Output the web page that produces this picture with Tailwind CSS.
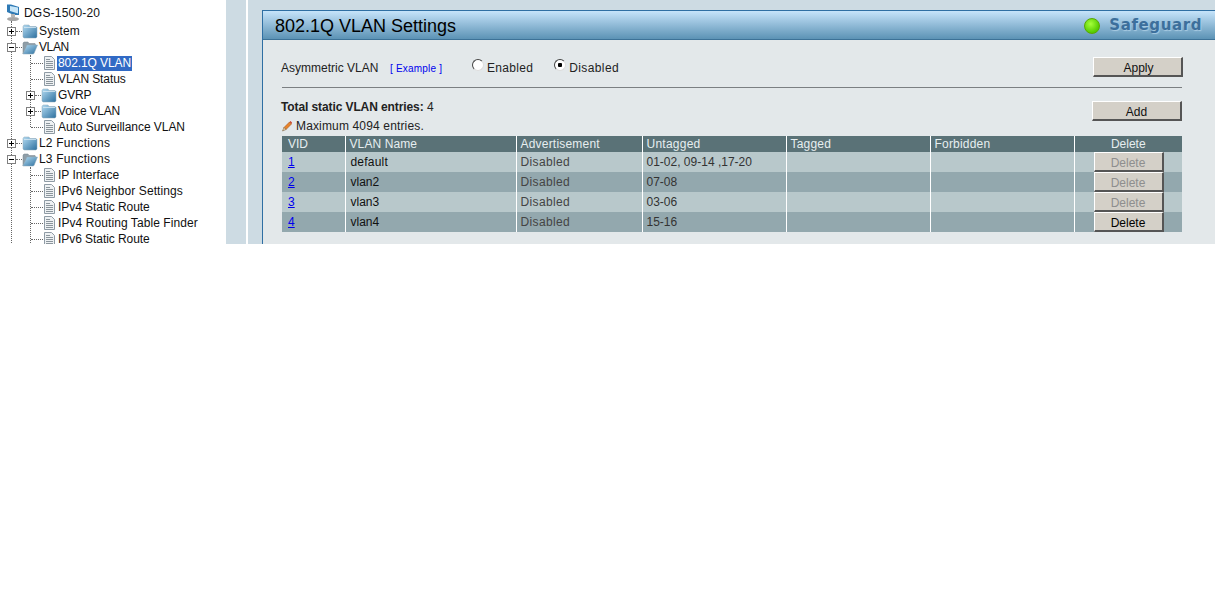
<!DOCTYPE html>
<html lang="en">
  <head>
    <meta charset="UTF-8" />
    <title>802.1Q VLAN Settings</title>
    <script src="https://cdn.jsdelivr.net/npm/@tailwindcss/browser@4"></script>
  </head>
  <body class="bg-white font-['Liberation_Sans',Arial,sans-serif] text-[12px] text-[#111]">
    <!-- icon sprites -->
    <svg class="absolute h-0 w-0" width="0" height="0">
      <defs>
        <linearGradient id="fold" x1="0" y1="0" x2="1" y2="1">
          <stop offset="0" stop-color="#b4dcf3" />
          <stop offset="1" stop-color="#2c6f9e" />
        </linearGradient>
        <symbol id="folder" viewBox="0 0 16 16">
          <path d="M1 3.500 2 2h5l1 1.500h6l1 1V14l-1 1H2l-1-1z" fill="url(#fold)" stroke="#8fa8b9" stroke-width=".5" />
          <path d="M2 4.500h12" stroke="#d5e8f4" stroke-width=".8" />
        </symbol>
        <symbol id="folder-open" viewBox="0 0 16 16">
          <path d="M1 15V4l1-1h4l1 1.500h6l.5 1V7H5z" fill="#8f9ea8" stroke="#77858e" stroke-width=".5" />
          <path d="M1 15 5 6h10.500L12 14.500l-1 .5z" fill="url(#fold)" stroke="#8fa8b9" stroke-width=".5" />
        </symbol>
        <symbol id="doc" viewBox="0 0 13 14">
          <path d="M1.500.5h7l3 3v10h-10z" fill="#eef1f3" stroke="#8f9ba5" />
          <path d="M3 3.500h4M3 5.500h7M3 7.500h7M3 9.500h7M3 11.500h7" stroke="#8b959c" />
        </symbol>
      </defs>
    </svg>

    <div class="flex h-[244px] overflow-hidden">
      <!-- Tree -->
      <div class="w-[226px] shrink-0 pt-[5px] pl-[5px]">
        <div class="flex h-4 items-center">
          <svg class="h-[18px] w-[16px] shrink-0" viewBox="0 0 16 18">
            <path d="M2 .5h4L14 3v8H9L2 8z" fill="#2f7ab5" />
            <path d="M5 2l8 1.500v6L5 7z" fill="#c8e6f8" />
            <path d="M6 10h4v3H6z" fill="#b5b5b5" />
            <ellipse cx="8" cy="15" rx="6" ry="2" fill="#a6a6a6" />
          </svg>
          <span class="ml-[3px] tracking-[0.2px]">DGS-1500-20</span>
        </div>

        <div class="ml-[6px] border-l border-dotted border-[#666] pt-[2px]">
          <div class="flex h-4 items-center">
            <span class="-ml-[5px] flex h-[9px] w-[9px] shrink-0 items-center justify-center border border-[#808080] bg-white"><span class="relative block h-px w-[5px] bg-black"><span class="absolute -top-[2px] left-[2px] block h-[5px] w-px bg-black"></span></span></span>
            <span class="w-[6px] border-t border-dotted border-[#666]"></span>
            <svg class="h-4 w-4 shrink-0"><use href="#folder" /></svg>
            <span class="ml-[1px] tracking-[0.15px]">System</span>
          </div>
          <div class="flex h-4 items-center">
            <span class="-ml-[5px] flex h-[9px] w-[9px] shrink-0 items-center justify-center border border-[#808080] bg-white"><span class="block h-px w-[5px] bg-black"></span></span>
            <span class="w-[6px] border-t border-dotted border-[#666]"></span>
            <svg class="h-4 w-4 shrink-0"><use href="#folder-open" /></svg>
            <span class="ml-[1px] tracking-[-0.4px]">VLAN</span>
          </div>

          <div class="ml-[18px] mb-[8px] h-[72px] border-l border-dotted border-[#666]">
            <div class="flex h-4 items-center">
              <span class="w-[12px] border-t border-dotted border-[#666]"></span>
              <svg class="h-[14px] w-[13px] shrink-0"><use href="#doc" /></svg>
              <span class="ml-[1px] bg-[#316ac5] px-[1px] leading-[15px] tracking-[-0.1px] text-white">802.1Q VLAN</span>
            </div>
            <div class="flex h-4 items-center">
              <span class="w-[12px] border-t border-dotted border-[#666]"></span>
              <svg class="h-[14px] w-[13px] shrink-0"><use href="#doc" /></svg>
              <span class="ml-[2px] tracking-[-0.1px]">VLAN Status</span>
            </div>
            <div class="flex h-4 items-center">
              <span class="-ml-[5px] flex h-[9px] w-[9px] shrink-0 items-center justify-center border border-[#808080] bg-white"><span class="relative block h-px w-[5px] bg-black"><span class="absolute -top-[2px] left-[2px] block h-[5px] w-px bg-black"></span></span></span>
              <span class="w-[6px] border-t border-dotted border-[#666]"></span>
              <svg class="h-4 w-4 shrink-0"><use href="#folder" /></svg>
              <span class="ml-[1px] tracking-[-0.2px]">GVRP</span>
            </div>
            <div class="flex h-4 items-center">
              <span class="-ml-[5px] flex h-[9px] w-[9px] shrink-0 items-center justify-center border border-[#808080] bg-white"><span class="relative block h-px w-[5px] bg-black"><span class="absolute -top-[2px] left-[2px] block h-[5px] w-px bg-black"></span></span></span>
              <span class="w-[6px] border-t border-dotted border-[#666]"></span>
              <svg class="h-4 w-4 shrink-0"><use href="#folder" /></svg>
              <span class="ml-[1px] tracking-[-0.2px]">Voice VLAN</span>
            </div>
            <div class="flex h-4 items-center">
              <span class="w-[12px] border-t border-dotted border-[#666]"></span>
              <svg class="h-[14px] w-[13px] shrink-0"><use href="#doc" /></svg>
              <span class="ml-[2px] whitespace-nowrap tracking-[-0.05px]">Auto Surveillance VLAN</span>
            </div>
          </div>

          <div class="flex h-4 items-center">
            <span class="-ml-[5px] flex h-[9px] w-[9px] shrink-0 items-center justify-center border border-[#808080] bg-white"><span class="relative block h-px w-[5px] bg-black"><span class="absolute -top-[2px] left-[2px] block h-[5px] w-px bg-black"></span></span></span>
            <span class="w-[6px] border-t border-dotted border-[#666]"></span>
            <svg class="h-4 w-4 shrink-0"><use href="#folder" /></svg>
            <span class="ml-[1px] tracking-[0.2px]">L2 Functions</span>
          </div>
          <div class="flex h-4 items-center">
            <span class="-ml-[5px] flex h-[9px] w-[9px] shrink-0 items-center justify-center border border-[#808080] bg-white"><span class="block h-px w-[5px] bg-black"></span></span>
            <span class="w-[6px] border-t border-dotted border-[#666]"></span>
            <svg class="h-4 w-4 shrink-0"><use href="#folder-open" /></svg>
            <span class="ml-[1px] tracking-[0.2px]">L3 Functions</span>
          </div>

          <div class="ml-[18px] border-l border-dotted border-[#666]">
            <div class="flex h-4 items-center">
              <span class="w-[12px] border-t border-dotted border-[#666]"></span>
              <svg class="h-[14px] w-[13px] shrink-0"><use href="#doc" /></svg>
              <span class="ml-[2px]">IP Interface</span>
            </div>
            <div class="flex h-4 items-center">
              <span class="w-[12px] border-t border-dotted border-[#666]"></span>
              <svg class="h-[14px] w-[13px] shrink-0"><use href="#doc" /></svg>
              <span class="ml-[2px] tracking-[0.1px]">IPv6 Neighbor Settings</span>
            </div>
            <div class="flex h-4 items-center">
              <span class="w-[12px] border-t border-dotted border-[#666]"></span>
              <svg class="h-[14px] w-[13px] shrink-0"><use href="#doc" /></svg>
              <span class="ml-[2px] tracking-[-0.06px]">IPv4 Static Route</span>
            </div>
            <div class="flex h-4 items-center">
              <span class="w-[12px] border-t border-dotted border-[#666]"></span>
              <svg class="h-[14px] w-[13px] shrink-0"><use href="#doc" /></svg>
              <span class="ml-[2px] tracking-[0.08px]">IPv4 Routing Table Finder</span>
            </div>
            <div class="flex h-4 items-center">
              <span class="w-[12px] border-t border-dotted border-[#666]"></span>
              <svg class="h-[14px] w-[13px] shrink-0"><use href="#doc" /></svg>
              <span class="ml-[2px] tracking-[-0.06px]">IPv6 Static Route</span>
            </div>
          </div>
        </div>
      </div>

      <div class="w-[20px] shrink-0 bg-[#cddbe3]"></div>
      <div class="w-[2px] shrink-0 bg-white"></div>

      <!-- Main -->
      <div class="flex-1 bg-[#cddbe3] pl-[14px] pt-[10px]">
        <div class="h-full border-l border-t border-[#2f6fa3] bg-[#e3e8ea]">
          <div class="flex h-[29px] items-center justify-between border-b border-[#3d7297] bg-gradient-to-b from-[#c6e4fa] to-[#5c93b5] pl-[12px] pr-[13px]">
            <h1 class="mt-[2px] text-[18px] leading-none text-black">802.1Q VLAN Settings</h1>
            <div class="mt-[1px] flex items-center">
              <span class="h-[16px] w-[16px] rounded-full border border-[#5aa800] bg-[radial-gradient(circle_at_40%_35%,#a6ff3a,#55cc00_70%)]"></span>
              <span class="ml-[9px] font-['DejaVu_Sans',sans-serif] text-[15px] leading-none font-bold tracking-[0.6px] text-[#3c6f9c] [text-shadow:1px_1px_1px_#a9cbe2]">Safeguard</span>
            </div>
          </div>

          <div class="w-[919px] pl-[19px]">
            <div class="flex h-[48px] items-center border-b border-[#7b7f82] pt-[8px]">
              <span class="-ml-[1px] mt-[1px] w-[109px] text-[#222]">Asymmetric VLAN</span>
              <a class="mt-[2px] w-[82px] text-[10px] tracking-[0.2px] text-[#0000ee]" href="#">[ Example ]</a>
              <label class="mt-[1px] flex items-center tracking-[0.3px] text-[#222]">
                <input type="radio" name="asym" class="-mt-[7px] h-3 w-3 appearance-none rounded-full border border-t-[#444] border-l-[#444] border-r-[#ddd] border-b-[#ddd] bg-white" />
                <span class="ml-[3px]">Enabled</span>
              </label>
              <label class="mt-[1px] ml-[21px] flex items-center tracking-[0.4px] text-[#222]">
                <input type="radio" name="asym" checked class="-mt-[7px] h-3 w-3 appearance-none rounded-full border border-t-[#444] border-l-[#444] border-r-[#ddd] border-b-[#ddd] bg-[radial-gradient(circle,#000_2px,#fff_2.5px)]" />
                <span class="ml-[3px]">Disabled</span>
              </label>
              <button class="ml-auto -mr-[1px] -mt-[1px] h-[20px] w-[90px] border-t border-l border-white border-r-2 border-b-2 border-r-[#555] border-b-[#555] bg-[#d4d0c8] pt-[1px] pl-[2px] text-[12px] text-[#111]">Apply</button>
            </div>

            <div class="relative -ml-[1px] h-[48px] pt-[12px]">
              <p class="leading-[14px] text-[#222]"><b class="tracking-[-0.1px]">Total static VLAN entries:</b> 4</p>
              <p class="mt-[5px] flex items-center leading-[14px] tracking-[0.15px] text-[#222]">
                <svg class="mr-[3px] h-[12px] w-[12px]" viewBox="0 0 12 12">
                  <path d="M3 7.500 8.500 2l2 2L5 9.500z" fill="#e8842a" stroke="#a5531a" stroke-width=".6" />
                  <path d="M8.500 2 9.500 1l1.500 1.500-.5 1.500z" fill="#c8402c" />
                  <path d="M3 7.500 5 9.500 1.500 11z" fill="#f1d9a8" stroke="#6b4a2a" stroke-width=".5" />
                </svg>
                Maximum 4094 entries.
              </p>
              <button class="absolute right-0 top-[13px] h-[20px] w-[90px] border-t border-l border-white border-r-2 border-b-2 border-r-[#555] border-b-[#555] bg-[#d4d0c8] pt-[1px] text-[12px] text-[#111]">Add</button>
            </div>

            <table class="w-[900px] table-fixed border-collapse text-left text-[#222]">
              <colgroup>
                <col class="w-[63px]" /><col class="w-[171px]" /><col class="w-[126px]" /><col class="w-[144px]" /><col class="w-[144px]" /><col class="w-[144px]" /><col class="w-[108px]" />
              </colgroup>
              <thead class="bg-[#5a7277] text-[#e6eef0]">
                <tr class="h-4 leading-4">
                  <th class="border-r border-white pl-[6px] font-normal">VID</th>
                  <th class="border-r border-white pl-[4px] font-normal tracking-[0.1px]">VLAN Name</th>
                  <th class="border-r border-white pl-[4px] font-normal tracking-[0.2px]">Advertisement</th>
                  <th class="border-r border-white pl-[4px] font-normal tracking-[0.25px]">Untagged</th>
                  <th class="border-r border-white pl-[4px] font-normal tracking-[0.2px]">Tagged</th>
                  <th class="border-r border-white pl-[4px] font-normal tracking-[0.2px]">Forbidden</th>
                  <th class="text-center font-normal">Delete</th>
                </tr>
              </thead>
              <tbody>
                <tr class="h-5 bg-[#b8c8cb]">
                  <td class="border-r border-white pl-[6px]"><a class="text-[#0000ee] underline" href="#">1</a></td>
                  <td class="border-r border-white pl-[5px] tracking-[0.2px] text-[#111]">default</td>
                  <td class="border-r border-white pl-[4px] tracking-[0.35px] text-[#444]">Disabled</td>
                  <td class="border-r border-white pl-[4px] text-[#333]">01-02, 09-14 ,17-20</td>
                  <td class="border-r border-white"></td>
                  <td class="border-r border-white"></td>
                  <td class="p-0 pl-[19px]"><button disabled class="block h-5 w-[70px] border-t border-l border-white border-r-2 border-b-2 border-r-[#555] border-b-[#555] bg-[#d4d0c8] pt-[1px] text-[12px] text-[#8e8e8e]">Delete</button></td>
                </tr>
                <tr class="h-5 bg-[#93a8ae]">
                  <td class="border-r border-white pl-[6px]"><a class="text-[#0000ee] underline" href="#">2</a></td>
                  <td class="border-r border-white pl-[5px] text-[#111]">vlan2</td>
                  <td class="border-r border-white pl-[4px] tracking-[0.35px] text-[#444]">Disabled</td>
                  <td class="border-r border-white pl-[4px] text-[#333]">07-08</td>
                  <td class="border-r border-white"></td>
                  <td class="border-r border-white"></td>
                  <td class="p-0 pl-[19px]"><button disabled class="block h-5 w-[70px] border-t border-l border-white border-r-2 border-b-2 border-r-[#555] border-b-[#555] bg-[#d4d0c8] pt-[1px] text-[12px] text-[#8e8e8e]">Delete</button></td>
                </tr>
                <tr class="h-5 bg-[#b8c8cb]">
                  <td class="border-r border-white pl-[6px]"><a class="text-[#0000ee] underline" href="#">3</a></td>
                  <td class="border-r border-white pl-[5px] text-[#111]">vlan3</td>
                  <td class="border-r border-white pl-[4px] tracking-[0.35px] text-[#444]">Disabled</td>
                  <td class="border-r border-white pl-[4px] text-[#333]">03-06</td>
                  <td class="border-r border-white"></td>
                  <td class="border-r border-white"></td>
                  <td class="p-0 pl-[19px]"><button disabled class="block h-5 w-[70px] border-t border-l border-white border-r-2 border-b-2 border-r-[#555] border-b-[#555] bg-[#d4d0c8] pt-[1px] text-[12px] text-[#8e8e8e]">Delete</button></td>
                </tr>
                <tr class="h-5 bg-[#93a8ae]">
                  <td class="border-r border-white pl-[6px]"><a class="text-[#0000ee] underline" href="#">4</a></td>
                  <td class="border-r border-white pl-[5px] text-[#111]">vlan4</td>
                  <td class="border-r border-white pl-[4px] tracking-[0.35px] text-[#444]">Disabled</td>
                  <td class="border-r border-white pl-[4px] text-[#333]">15-16</td>
                  <td class="border-r border-white"></td>
                  <td class="border-r border-white"></td>
                  <td class="p-0 pl-[19px]"><button class="block h-5 w-[70px] border-t border-l border-white border-r-2 border-b-2 border-r-[#555] border-b-[#555] bg-[#d4d0c8] pt-[1px] text-[12px] text-black">Delete</button></td>
                </tr>
              </tbody>
            </table>
          </div>
        </div>
      </div>
    </div>
  </body>
</html>
